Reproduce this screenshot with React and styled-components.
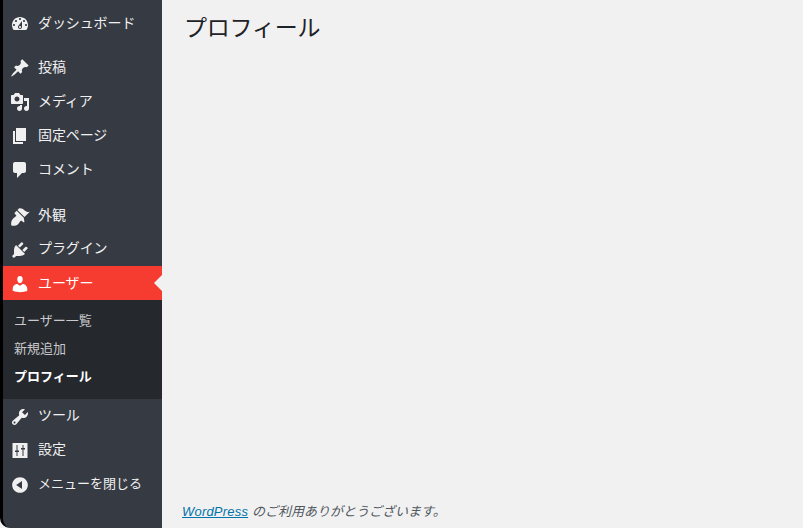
import React from 'react';
import styled, { createGlobalStyle } from 'styled-components';

const GlobalStyle = createGlobalStyle`
    html, body {
        margin: 0;
        height: 100%;
        background: #f1f1f1;
    }
    #root {
        height: 100%;
    }
`;

// dashicons-style drawings, 20x20 grid
const icons = {
    dashboard: 'M3.76 16h12.48c1.1-1.37 1.76-3.11 1.76-5 0-4.42-3.58-8-8-8s-8 3.58-8 8c0 1.89.66 3.63 1.76 5zM10 4c.55 0 1 .45 1 1s-.45 1-1 1-1-.45-1-1 .45-1 1-1zM6 6c.55 0 1 .45 1 1s-.45 1-1 1-1-.45-1-1 .45-1 1-1zm8 0c.55 0 1 .45 1 1s-.45 1-1 1-1-.45-1-1 .45-1 1-1zm-5.37 5.55L12 7v6c0 1.1-.9 2-2 2s-2-.9-2-2c0-.57.24-1.08.63-1.45zM4 10c.55 0 1 .45 1 1s-.45 1-1 1-1-.45-1-1 .45-1 1-1zm12 0c.55 0 1 .45 1 1s-.45 1-1 1-1-.45-1-1 .45-1 1-1zm-5 3c0-.55-.45-1-1-1s-1 .45-1 1 .45 1 1 1 1-.45 1-1z',
    post: 'M10.44 3.02l1.82-1.82 6.36 6.35-1.83 1.82c-1.05-.68-2.48-.57-3.41.36l-.75.75c-.92.93-1.04 2.35-.35 3.41l-1.83 1.82-2.41-2.41-2.8 2.79c-.42.42-3.38 2.71-3.8 2.29s1.86-3.39 2.28-3.81l2.79-2.79L4.1 9.36l1.83-1.82c1.05.69 2.48.57 3.4-.36l.75-.75c.93-.92 1.05-2.35.36-3.41z',
    media: 'M13 11V4c0-.55-.45-1-1-1h-1.67L9 1H5L3.67 3H2c-.55 0-1 .45-1 1v7c0 .55.45 1 1 1h10c.55 0 1-.45 1-1zM7 4.5c1.38 0 2.5 1.12 2.5 2.5S8.38 9.5 7 9.5 4.5 8.38 4.5 7 5.62 4.5 7 4.5zM14 6h5v10.5c0 1.38-1.12 2.5-2.5 2.5S14 17.88 14 16.5s1.12-2.5 2.5-2.5c.17 0 .34.02.5.05V9h-3V6zm-4 8.05V13h2v3.5c0 1.38-1.12 2.5-2.5 2.5S7 17.88 7 16.5 8.12 14 9.5 14c.17 0 .34.02.5.05z',
    page: 'M6 15V2h10v13H6zm-1 1h8v2H3V5h2v11z',
    comments: 'M5 2h9c1.1 0 2 .9 2 2v7c0 1.1-.9 2-2 2h-2l-5 5v-5H5c-1.1 0-2-.9-2-2V4c0-1.1.9-2 2-2z',
    appearance: 'M14.48 11.06L7.41 3.99l1.5-1.5c.5-.56 2.3-.47 3.51.32 1.21.8 1.43 1.28 2.91 2.1 1.18.64 2.45 1.26 4.45.85zm-.71.71L6.7 4.7 4.93 6.47c-.39.39-.39 1.02 0 1.41l1.06 1.06c.39.39.39 1.03 0 1.42-.6.6-1.43 1.11-2.21 1.69-.35.26-.7.53-1.01.84-1.43 1.43-2 4.5-1.4 6.6 2.1.6 5.22.03 6.65-1.35.31-.31.58-.66.84-1.01.58-.78 1.09-1.61 1.69-2.21.39-.39 1.03-.39 1.42 0l1.06 1.06c.39.39 1.02.39 1.41 0z',
    plugins: 'M13.11 4.36L9.87 7.6 8 5.73l3.24-3.24c.35-.34 1.05-.2 1.56.32.52.51.66 1.21.31 1.55zm-8 1.77l.91-1.12 9.01 9.01-1.19.84c-.71.71-2.63 1.16-3.82 1.16H6.14L4.9 17.26c-.59.59-1.54.59-2.12 0-.59-.58-.59-1.53 0-2.12l1.24-1.24v-3.88c0-1.13.4-3.19 1.09-3.89zm7.26 3.97l3.24-3.24c.34-.35 1.04-.21 1.55.31.52.51.66 1.21.31 1.55l-3.24 3.25z',
    users: 'M10 9.25c-2.27 0-2.73-3.44-2.73-3.44C7 4.02 7.82 2 9.97 2c2.16 0 2.98 2.02 2.71 3.81 0 0-.41 3.44-2.68 3.44zm0 2.57L12.72 10c2.39 0 4.52 2.33 4.52 4.53v2.49s-3.65 1.13-7.24 1.13c-3.65 0-7.24-1.13-7.24-1.13v-2.49c0-2.25 1.94-4.48 4.47-4.48z',
    tools: 'M16.68 9.77c-1.34 1.34-3.3 1.67-4.95.99l-5.41 6.52c-.99.99-2.59.99-3.58 0s-.99-2.59 0-3.57l6.52-5.42c-.68-1.65-.35-3.61.99-4.95 1.28-1.28 3.12-1.62 4.72-1.06l-2.89 2.89 2.82 2.82 2.86-2.87c.53 1.58.18 3.39-1.08 4.65zM3.81 16.21c.4.39 1.04.39 1.43 0 .4-.4.4-1.04 0-1.43-.39-.4-1.03-.4-1.43 0-.39.39-.39 1.03 0 1.43z',
    settings: 'M2.5 2h15v15h-15zM6.5 4v5.500H5V11h1.500v4h1v-4H9V9.500H7.500V4zM12.500 4v3H11v1.500h1.500V15h1V8.500H15V7h-1.500V4z',
    collapse: 'M10 2.16c4.33 0 7.84 3.51 7.84 7.84s-3.51 7.84-7.84 7.84S2.16 14.33 2.16 10 5.71 2.16 10 2.16zm2 11.72V6.12L6.18 9.97z',
};

const Page = styled.div`
    display: flex;
    height: 528px;
    overflow: hidden;
    font-family: "Noto Sans CJK JP", "Liberation Sans", sans-serif;
`;

const Sidebar = styled.nav`
    width: 159px;
    flex-shrink: 0;
    padding-top: 6px;
    background: #363a42;
    border-left: 3px solid #000;
    border-bottom-left-radius: 10px;
`;

const Group = styled.ul`
    list-style: none;
    margin: 0 0 ${props => props.$gap}px;
    padding: 0;
`;

const Item = styled.li`
    position: relative;
    display: flex;
    align-items: center;
    gap: 8px;
    height: 34px;
    padding-left: 7px;
    color: ${props => (props.$active ? '#fff' : '#f0f0f1')};
    background: ${props => (props.$active ? '#f63c30' : 'transparent')};
`;

const Label = styled.span`
    margin-bottom: ${props => (props.$lift ? 4 : 2)}px;
    font-size: ${props => (props.$small ? 13 : 14)}px;
    letter-spacing: ${props => (props.$small ? 0 : -0.1)}px;
`;

const Glyph = styled.svg`
    margin-top: 2px;
    flex-shrink: 0;
`;

const Arrow = styled.span`
    position: absolute;
    right: 0;
    top: 50%;
    margin-top: -8px;
    border: 8px solid transparent;
    border-right-color: #f1f1f1;
    border-left-width: 0;
`;

const SubMenu = styled.ul`
    list-style: none;
    margin: 0;
    padding: 6px 0 9px;
    background: #25282d;
`;

const SubItem = styled.li`
    height: 28px;
    padding-left: 11px;
    font-size: 13px;
    line-height: 28px;
    color: ${props => (props.$current ? '#fff' : '#c7c9cc')};
    font-weight: ${props => (props.$current ? 700 : 400)};
`;

const Main = styled.main`
    flex: 1;
    display: flex;
    flex-direction: column;
    justify-content: space-between;
    padding: 9px 20px 6px 20px;
`;

const Title = styled.h1`
    margin: 0 0 0 2px;
    font-size: 23px;
    font-weight: 400;
    line-height: 34px;
    letter-spacing: -0.2px;
    color: #1d2327;
`;

const Footer = styled.p`
    margin: 0;
    font-size: 13px;
    font-style: italic;
    line-height: 20px;
    color: #50575e;
`;

const FooterLink = styled.a`
    margin-right: 1px;
    color: #0073aa;
    font-family: "Liberation Sans", sans-serif;
    letter-spacing: 0.2px;
    text-decoration: underline;
`;

const Icon = ({ name }) => (
    <Glyph width="20" height="20" viewBox="0 0 20 20" fill="currentColor" fillRule="evenodd">
        <path d={icons[name]} />
    </Glyph>
);

const MenuRow = ({ icon, label, active, small, lift }) => (
    <Item $active={active}>
        <Icon name={icon} />
        <Label $small={small} $lift={lift}>{label}</Label>
        {active && <Arrow />}
    </Item>
);

const App = () => (
    <Page>
        <GlobalStyle />
        <Sidebar>
            <Group $gap={10}>
                <MenuRow icon="dashboard" label="ダッシュボード" />
            </Group>
            <Group $gap={12}>
                <MenuRow icon="post" label="投稿" />
                <MenuRow icon="media" label="メディア" />
                <MenuRow icon="page" label="固定ページ" />
                <MenuRow icon="comments" label="コメント" />
            </Group>
            <Group $gap={0}>
                <MenuRow icon="appearance" label="外観" />
                <MenuRow icon="plugins" label="プラグイン" lift />
                <MenuRow icon="users" label="ユーザー" active />
                <SubMenu>
                    <SubItem>ユーザー一覧</SubItem>
                    <SubItem>新規追加</SubItem>
                    <SubItem $current>プロフィール</SubItem>
                </SubMenu>
                <MenuRow icon="tools" label="ツール" lift />
                <MenuRow icon="settings" label="設定" lift />
                <MenuRow icon="collapse" label="メニューを閉じる" small lift />
            </Group>
        </Sidebar>
        <Main>
            <Title>プロフィール</Title>
            <Footer>
                <FooterLink href="#">WordPress</FooterLink> のご利用ありがとうございます。
            </Footer>
        </Main>
    </Page>
);

export default App;
